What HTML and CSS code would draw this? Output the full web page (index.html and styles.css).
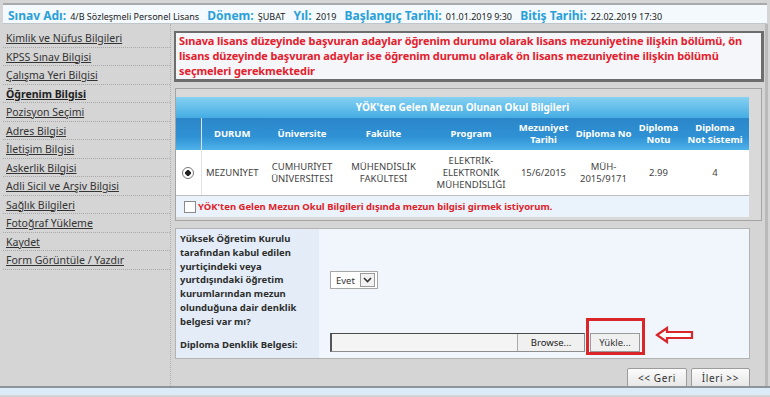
FILE: index.html
```html
<!DOCTYPE html>
<html lang="tr">
<head>
  <meta charset="UTF-8" />
  <title>Öğrenim Bilgisi</title>
  <link rel="stylesheet" href="styles.css">
</head>
<body>
  <div class="header">
    <span class="lbl">Sınav Adı:</span> <span class="val">4/B Sözleşmeli Personel Lisans</span>
    <span class="lbl">Dönem:</span> <span class="val">ŞUBAT</span>
    <span class="lbl">Yıl:</span> <span class="val">2019</span>
    <span class="lbl">Başlangıç Tarihi:</span> <span class="val">01.01.2019 9:30</span>
    <span class="lbl">Bitiş Tarihi:</span> <span class="val">22.02.2019 17:30</span>
  </div>

  <div class="page">
    <div class="menu">
      <a href="#">Kimlik ve Nüfus Bilgileri</a>
      <a href="#">KPSS Sınav Bilgisi</a>
      <a href="#">Çalışma Yeri Bilgisi</a>
      <a href="#" class="active">Öğrenim Bilgisi</a>
      <a href="#">Pozisyon Seçimi</a>
      <a href="#">Adres Bilgisi</a>
      <a href="#">İletişim Bilgisi</a>
      <a href="#">Askerlik Bilgisi</a>
      <a href="#">Adli Sicil ve Arşiv Bilgisi</a>
      <a href="#">Sağlık Bilgileri</a>
      <a href="#">Fotoğraf Yükleme</a>
      <a href="#">Kaydet</a>
      <a href="#">Form Görüntüle / Yazdır</a>
    </div>

    <div class="main">
      <div class="notice">
        Sınava lisans düzeyinde başvuran adaylar öğrenim durumu olarak lisans mezuniyetine ilişkin bölümü, ön lisans düzeyinde başvuran adaylar ise öğrenim durumu olarak ön lisans mezuniyetine ilişkin bölümü<br>seçmeleri gerekmektedir
      </div>

      <div class="yok">
        <div class="yok-title">YÖK'ten Gelen Mezun Olunan Okul Bilgileri</div>
        <table class="grid">
          <colgroup>
            <col style="width:25px"><col style="width:62px"><col style="width:78px">
            <col style="width:85px"><col style="width:90px"><col style="width:55px">
            <col style="width:65px"><col style="width:45px"><col>
          </colgroup>
          <thead>
            <tr>
              <th class="c-radio"></th>
              <th>DURUM</th>
              <th>Üniversite</th>
              <th>Fakülte</th>
              <th>Program</th>
              <th>Mezuniyet<br>Tarihi</th>
              <th>Diploma No</th>
              <th>Diploma<br>Notu</th>
              <th>Diploma<br>Not Sistemi</th>
            </tr>
          </thead>
          <tbody>
            <tr>
              <td class="c-radio"><span class="radio"></span></td>
              <td>MEZUNİYET</td>
              <td>CUMHURİYET<br>ÜNİVERSİTESİ</td>
              <td>MÜHENDİSLİK<br>FAKÜLTESİ</td>
              <td>ELEKTRİK-<br>ELEKTRONİK<br>MÜHENDİSLİĞİ</td>
              <td>15/6/2015</td>
              <td>MÜH-<br>2015/9171</td>
              <td>2.99</td>
              <td>4</td>
            </tr>
          </tbody>
        </table>
        <label class="other">
          <span class="check"></span>
          YÖK'ten Gelen Mezun Okul Bilgileri dışında mezun bilgisi girmek istiyorum.
        </label>
      </div>

      <div class="denklik">
        <div class="d-label">Yüksek Öğretim Kurulu tarafından kabul edilen yurtiçindeki veya yurtdışındaki öğretim kurumlarından mezun olunduğuna dair denklik belgesi var mı?</div>
        <div class="d-field">
          <span class="select">Evet <span class="arrow"><svg width="9" height="6" viewBox="0 0 9 6"><path d="M1 1 L4.5 4.5 L8 1" fill="none" stroke="#333" stroke-width="1.6"/></svg></span></span>
        </div>
        <div class="d-label single">Diploma Denklik Belgesi:</div>
        <div class="d-field file-row">
          <span class="file"><span class="file-box"></span><span class="browse">Browse...</span></span>
          <span class="upload-wrap"><span class="upload">Yükle...</span></span>
          <svg class="pointer" width="40" height="18" viewBox="0 0 40 18">
            <path d="M2 9 L12 2 L12 6 L37 6 L37 12 L12 12 L12 16 Z" fill="#fff" stroke="#d8262a" stroke-width="2.2"/>
          </svg>
        </div>
      </div>

      <div class="nav">
        <button>&lt;&lt; Geri</button>
        <button>İleri &gt;&gt;</button>
      </div>
    </div>
  </div>
  <div class="footer"></div>
</body>
</html>
```

FILE: styles.css
```css
body {
  margin: 0;
  background: #d5d5d5;
  font-family: "Noto Sans", "Open Sans", sans-serif;
  color: #333;
  height: 397px;
  overflow: hidden;
}

.header {
  margin: 3px 3px 0 3px;
  height: 21px;
  line-height: 19px;
  padding-left: 5px;
  background: #f3f9fd;
  border-top: 2px solid #a9a9a9;
  border-bottom: 1px solid #bfc7cc;
  white-space: nowrap;
  box-sizing: border-box;
}

.header .lbl {
  color: #2aa0d8;
  font-weight: bold;
  font-size: 12px;
  margin-left: 4px;
}

.header .lbl:first-child {
  margin-left: 0;
}

.header .val {
  font-size: 9px;
  color: #222;
}

.page {
  display: flex;
  height: 362px;
  border-bottom: 2px solid #8e959a;
  overflow: hidden;
}

.menu {
  width: 167px;
  margin-left: 3px;
  padding-top: 5px;
  border-right: 1px dotted #b0b0b0;
  display: flex;
  flex-direction: column;
}

.menu a {
  display: block;
  height: 18.5px;
  line-height: 18px;
  padding-left: 3px;
  font-size: 10.5px;
  color: #333;
  text-decoration: underline;
  border-bottom: 1px dotted #a8a8a8;
  box-sizing: border-box;
}

.menu a.active {
  font-weight: bold;
  color: #222;
}

.main {
  flex: 1;
  padding: 7px 1px 0 3px;
  border-right: 3px solid #bababa;
  margin-right: 2px;
}

.notice {
  background: #f4f6fa;
  border: 2px solid #6d6d6d;
  border-right-width: 3px;
  border-bottom-width: 3px;
  padding: 0 3px 1px 3px;
  color: #e4202c;
  font-weight: bold;
  font-size: 11px;
  line-height: 15px;
  letter-spacing: -0.1px;
}

.yok {
  margin: 6px 2px 0 1px;
  border: 1px solid #a4a4a4;
  background: #d9d9d9;
  padding-top: 8px;
  padding-bottom: 3px;
}

.yok-title {
  height: 21px;
  line-height: 21px;
  text-align: center;
  color: #fff;
  font-weight: bold;
  font-size: 10px;
  background: linear-gradient(#86d1f3, #45ace3);
  margin-right: 12px;
}

.grid {
  width: calc(100% - 12px);
  table-layout: fixed;
  border-collapse: collapse;
  font-size: 9.5px;
}

.grid th {
  height: 32px;
  color: #fff;
  font-weight: bold;
  font-size: 9.5px;
  line-height: 12px;
  background: linear-gradient(#2b86c9, #2f92d4 60%, #4fb3ea);
  padding: 0 1px;
}

.grid td {
  height: 45px;
  padding: 0 1px;
  background: #fff;
  text-align: center;
  color: #444;
  line-height: 12px;
  border-bottom: 1px solid #bdbdbd;
}

.grid .c-radio {
  border-right: 1px solid #e2e2e2;
}

.radio {
  display: inline-block;
  width: 10px;
  height: 10px;
  border: 1px solid #777;
  border-radius: 50%;
  background: radial-gradient(circle, #222 0 2.6px, #fff 3px);
  vertical-align: middle;
}

.other {
  display: flex;
  align-items: center;
  gap: 2px;
  height: 21px;
  margin-right: 12px;
  padding-left: 8px;
  background: #eaf2fb;
  color: #e02128;
  font-weight: bold;
  font-size: 9.5px;
}

.check {
  width: 10px;
  height: 10px;
  border: 1px solid #8a8a8a;
  background: #fff;
}

.denklik {
  display: grid;
  grid-template-columns: 143px 1fr;
  margin: 7px 14px 0 1px;
  background: #f0f6fc;
  border: 1px solid #b3b3b3;
}

.d-label {
  background: #e4edf7;
  padding: 3px 4px;
  font-size: 9.5px;
  font-weight: bold;
  color: #2d2d2d;
  line-height: 13.8px;
}

.d-label.single {
  line-height: 20px;
}

.d-field {
  display: flex;
  align-items: center;
  padding-left: 11px;
}

.select {
  display: inline-flex;
  align-items: center;
  gap: 5px;
  height: 16px;
  padding: 0 2px 0 5px;
  border: 1px solid #a7a7a7;
  background: #fff;
  font-size: 9.5px;
}

.select .arrow {
  display: inline-flex;
  align-items: center;
  justify-content: center;
  width: 13px;
  height: 12px;
  border: 1px solid #9a9a9a;
  background: #f2f2f2;
}

.file-row {
  align-items: flex-end;
  padding-bottom: 6px;
}

.file {
  display: flex;
  width: 255px;
  height: 19px;
  border: 1px solid #8d8d8d;
  border-top-color: #4a4a4a;
  border-left: 2px solid #555;
  background: #f4f4f4;
  box-sizing: border-box;
}

.file-box {
  flex: 1;
}

.browse {
  width: 66px;
  line-height: 17px;
  text-align: center;
  font-size: 9.5px;
  color: #222;
  background: #f0f0f0;
  border-left: 1px solid #aaa;
}

.upload-wrap {
  display: flex;
  align-items: flex-end;
  box-sizing: border-box;
  width: 59px;
  height: 37px;
  padding: 0 2px 0 1px;
  margin: -14px 0 -3px 1px;
  border: 3px solid #d8262a;
}

.upload {
  display: block;
  width: 100%;
  height: 19px;
  line-height: 17px;
  text-align: center;
  font-size: 9.5px;
  background: #f0f0f0;
  border: 1px solid #9a9a9a;
  box-sizing: border-box;
}

.pointer {
  margin: -8px 0 8px 10px;
}

.nav {
  display: flex;
  justify-content: flex-end;
  gap: 4px;
  margin: 9px 14px 0 0;
}

.nav button {
  height: 20px;
  padding: 0 10px;
  font-family: inherit;
  font-size: 10px;
  letter-spacing: 0.6px;
  color: #333;
  background: linear-gradient(#fbfbfb, #e6e6e6);
  border: 1px solid #9c9c9c;
  border-radius: 2px;
}

.footer {
  height: 7px;
  background: #dcebf8;
}
```
